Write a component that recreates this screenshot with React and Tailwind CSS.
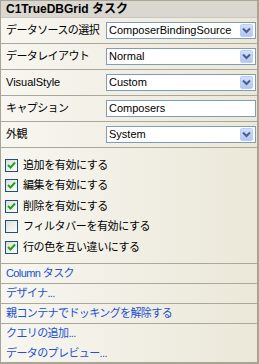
import { useState } from 'react';

const font = { fontFamily: '"Liberation Sans", "Noto Sans CJK JP", sans-serif' };

function Chevron() {
  return (
    <span className="w-[13px] h-[13px] mr-[2px] flex items-center justify-center rounded-[2px] border border-[#b9cdf6] bg-gradient-to-b from-[#d3e0fc] to-[#b2c6f4]">
      <svg width="9" height="7" viewBox="0 0 9 7">
        <path d="M1 1.5 L4.5 5 L8 1.5" fill="none" stroke="#4b5e8a" strokeWidth="2" />
      </svg>
    </span>
  );
}

function SelectBox({ value }) {
  return (
    <div className="w-[150px] h-[17px] flex items-center justify-between bg-white border border-[#7f9db9]">
      <span className="pl-[2px] text-[11px] text-black leading-none">{value}</span>
      <Chevron />
    </div>
  );
}

function TextBox({ value }) {
  return (
    <div className="w-[150px] h-[17px] flex items-center bg-white border border-[#7f9db9]">
      <span className="pl-[2px] text-[11px] text-black leading-none">{value}</span>
    </div>
  );
}

function Check({ checked }) {
  return (
    <span className="w-[13px] h-[13px] shrink-0 flex items-center justify-center border border-[#1c5180] bg-gradient-to-br from-[#dcdcd7] to-white">
      {checked && (
        <svg width="9" height="9" viewBox="0 0 9 9">
          <path d="M1 4 L3.5 6.5 L8 1.5" fill="none" stroke="#21a121" strokeWidth="2" />
        </svg>
      )}
    </span>
  );
}

export default function App() {
  const [checks, setChecks] = useState([true, true, true, false, true]);

  const rows = [
    { label: 'データソースの選択', value: 'ComposerBindingSource', select: true, jp: true },
    { label: 'データレイアウト', value: 'Normal', select: true, jp: true },
    { label: 'VisualStyle', value: 'Custom', select: true, jp: false },
    { label: 'キャプション', value: 'Composers', select: false, jp: true },
    { label: '外観', value: 'System', select: true, jp: true },
  ];

  const options = [
    '追加を有効にする',
    '編集を有効にする',
    '削除を有効にする',
    'フィルタバーを有効にする',
    '行の色を互い違いにする',
  ];

  const links = [
    'Column タスク',
    'デザイナ...',
    '親コンテナでドッキングを解除する',
    'クエリの追加...',
    'データのプレビュー...',
  ];

  return (
    <div style={font} className="w-[259px] h-[364px] flex flex-col overflow-hidden border-l border-t border-r-2 border-b-2 border-[#a8a595] bg-gradient-to-r from-[#f7f6f0] to-[#ebe8d9]">
      {/* Header */}
      <div className="h-[17px] shrink-0 flex items-center pl-[5px] bg-[#d9d7cf] border-b border-[#c9c6bb]">
        <span className="text-[12px] font-bold text-black leading-none">C1TrueDBGrid タスク</span>
      </div>

      {/* Properties */}
      {rows.map((row) => (
        <div key={row.label} className="h-[26px] shrink-0 flex items-center justify-between pl-[5px] pr-[1px] border-b border-[#aca899]">
          <span className={`text-[11px] text-black leading-none ${row.jp ? 'tracking-[-0.6px]' : ''}`}>{row.label}</span>
          {row.select ? <SelectBox value={row.value} /> : <TextBox value={row.value} />}
        </div>
      ))}

      {/* Options */}
      <div className="shrink-0 flex flex-col pt-[7px] pb-[5px] border-b border-[#aca899]">
        {options.map((opt, i) => (
          <label key={opt} className="h-[20.5px] flex items-center gap-[5px] pl-[4px] cursor-pointer">
            <input
              type="checkbox"
              className="hidden"
              checked={checks[i]}
              onChange={() => setChecks(prev => prev.map((c, j) => (j === i ? !c : c)))}
            />
            <Check checked={checks[i]} />
            <span className="text-[11px] text-black leading-none tracking-[-0.4px]">{opt}</span>
          </label>
        ))}
      </div>

      {/* Links */}
      {links.map((link, i) => (
        <div
          key={link}
          className={`${i < 4 ? 'h-[20px]' : 'h-[19px]'} shrink-0 flex items-center pl-[5px] ${i < 3 ? 'border-b border-[#aca899]' : ''}`}
        >
          <span className="text-[11px] text-[#2150d0] leading-none tracking-[-0.6px] cursor-pointer">{link}</span>
        </div>
      ))}
    </div>
  );
}
